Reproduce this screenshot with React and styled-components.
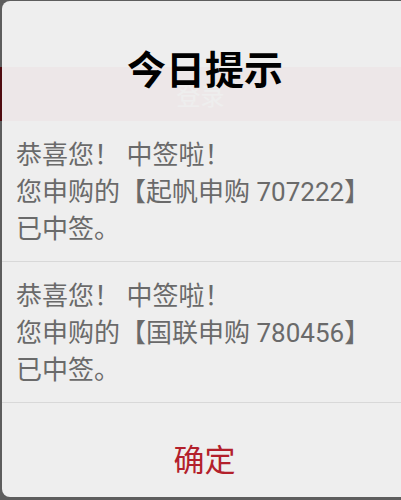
import React from 'react'
import styled, { createGlobalStyle } from 'styled-components'

const GlobalStyle = createGlobalStyle`
  html, body {
    margin: 0;
    padding: 0;
    height: 100%;
    overflow: hidden;
  }
  body {
    font-family: "Noto Sans CJK SC", "Noto Sans", sans-serif;
  }
`

const messages = [
  { id: 1, name: '起帆申购', code: '707222' },
  { id: 2, name: '国联申购', code: '780456' },
]

const Screen = styled.div`
  position: relative;
  width: 100%;
  height: 500px;
  overflow: hidden;
  background: #e8e8e8;
`

const LoginPage = styled.div`
  display: flex;
  flex-direction: column;
  padding-top: 67px;
`

const LoginButton = styled.div`
  height: 54px;
  display: flex;
  align-items: center;
  justify-content: center;
  background: #c81e28;
  color: #fff;
  font-size: 24px;
`

const LinkRow = styled.div`
  margin-top: 37px;
  display: flex;
  justify-content: center;
  gap: 56px;
  color: #fff;
  font-size: 20px;
  line-height: 24px;
`

const Scrim = styled.div`
  position: absolute;
  inset: 0;
  background: rgba(0, 0, 0, 0.6);
`

const Dialog = styled.div`
  position: absolute;
  top: 1px;
  left: 2px;
  right: -14px;
  height: 496px;
  display: flex;
  flex-direction: column;
  border-radius: 8px;
  background: rgba(250, 250, 250, 0.925);
  overflow: hidden;
`

const Title = styled.h1`
  margin: 0;
  height: 120px;
  box-sizing: border-box;
  padding: 43px 7px 0 0;
  text-align: center;
  font-family: "Noto Sans CJK SC", sans-serif;
  font-size: 39px;
  line-height: 46px;
  font-weight: 700;
  color: #000;
`

const Message = styled.p`
  margin: 0;
  padding: 16px 20px 13px 14px;
  font-family: Roboto, "Noto Sans CJK SC", sans-serif;
  font-size: 26px;
  line-height: 37px;
  color: #6a6a6a;
  border-top: ${({ $divided }) => ($divided ? '1px solid #d8d8d8' : 'none')};
`

const Footer = styled.button`
  flex: 1;
  display: flex;
  align-items: center;
  justify-content: center;
  margin: 0;
  padding: 15px 8px 0 0;
  border: none;
  border-top: 1px solid #d8d8d8;
  background: transparent;
  font-family: "Noto Sans CJK SC", sans-serif;
  font-size: 31px;
  color: #b3202b;
  cursor: pointer;
`

export default function App() {
  return (
    <>
      <GlobalStyle />
      <Screen>
        <LoginPage>
          <LoginButton>登录</LoginButton>
          <LinkRow>
            <span>如何注册？</span>
            <span>忘记密码？</span>
          </LinkRow>
        </LoginPage>
        <Scrim />
        <Dialog>
          <Title>今日提示</Title>
          {messages.map((m, i) => (
            <Message key={m.id} $divided={i > 0}>
              恭喜您！ 中签啦！
              <br />
              您申购的【{m.name} {m.code}】
              <br />
              已中签。
            </Message>
          ))}
          <Footer>确定</Footer>
        </Dialog>
      </Screen>
    </>
  )
}
